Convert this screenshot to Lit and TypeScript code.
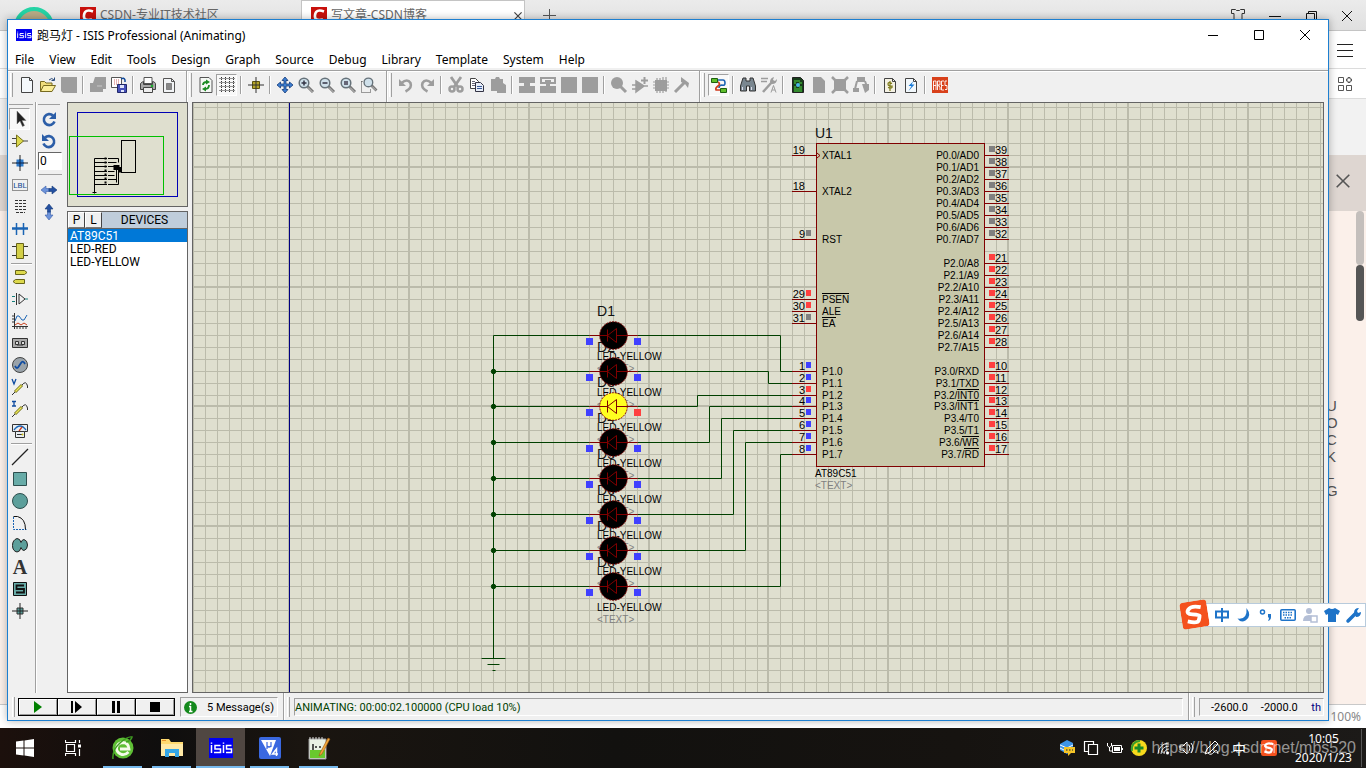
import { LitElement, html, svg, css } from "lit";
import { customElement, state } from "lit/decorators.js";
import { classMap } from "lit/directives/class-map.js";

const G = "#9d9d9d";

const lens = (inner: unknown) => svg`
  <path d="M9.500 9.500L15 15" stroke="#777" stroke-width="3"/>
  <path d="M10 10.500L14.500 15" stroke="#c9c9c9" stroke-width="1"/>
  <circle cx="6" cy="6" r="4.800" fill="#cfe0ea" stroke="#66727a" stroke-width="1.500"/>${inner}`;

const sheet = (fill: string, stroke: string) => svg`<path d="M2.500 1.500h8l3 3v11h-11z" fill="${fill}" stroke="${stroke}"/><path d="M10.500 1.500v3h3" fill="none" stroke="${stroke}"/>`;

const ICONS: Record<string, unknown> = {
  new: svg`<path d="M2.500 .5h8l3 3v12h-11z" fill="#f4f8fb" stroke="#444"/><path d="M10.500 .5v3h3" fill="none" stroke="#444"/>`,
  open: svg`<path d="M.5 14.500v-10h4l1.500 1.500h6v3" fill="#f0dd7c" stroke="#776a20"/><path d="M.5 14.500l3-6h12l-3.500 6z" fill="#fbee9a" stroke="#776a20"/><path d="M9 3q3-3 5 0m.5-2.500v3h-3" fill="none" stroke="#2a4a7a"/>`,
  save: svg`<path d="M0 0h16v16h-14l-2-2z" fill="${G}"/>`,
  importg: svg`<path d="M5 0h11v12h-3v3h-13v-9h3z" fill="${G}"/><path d="M7 9h5" stroke="#c8c8c8"/>`,
  exportb: svg`<path d="M.5 .5h10v10h-10z" fill="#fff" stroke="#555"/><path d="M3 3h5M3 5h5M3 7h5" stroke="#c66" stroke-dasharray="1 1"/><path d="M10 2q3-2 4 1v2" fill="none" stroke="#124a9a" stroke-width="1.500"/><path d="M6.500 7.500h9v8h-9z" fill="#4650b8" stroke="#20286a"/><path d="M9 8h4v3h-4zM10 13h3v2h-3z" fill="#dfe4fa"/>`,
  print: svg`<path d="M4 .5h8v6h-8z" fill="#fff" stroke="#555"/><path d="M.5 6.500q2-2 3-2v3h9v-3q2 0 3 2v6h-15z" fill="#a9a9a9" stroke="#444"/><path d="M3.500 10.500h9v5h-9z" fill="#eee" stroke="#444"/><circle cx="12" cy="9" r="1.300" fill="#1fae2e"/>`,
  docarea: svg`${sheet("#f2f4f6", "#555")}<path d="M5.500 6.500h5v6h-5z" fill="#888" stroke="#444" stroke-dasharray="1 1"/>`,
  refresh: svg`<path d="M2 .5h9l3 3v12h-12z" fill="#f5f8f5" stroke="#555"/><path d="M5 8q0-3 4-3M11 8q0 4-4 4" fill="none" stroke="#1d8b25" stroke-width="1.800"/><path d="M8 2.500l4 2.500-4 2.500zM8 9.500l-4 2.500 4 2.500z" fill="#1d8b25"/>`,
  grid: svg`<path d="M.5 1.500h15M.5 5.500h15M.5 9.500h15M.5 13.500h15M2.500 0v16M6.500 0v16M10.500 0v16M14.500 0v16" stroke="#333" stroke-dasharray="1 1" fill="none"/>`,
  origin: svg`<path d="M8 0v16M0 8h16" stroke="#333"/><path d="M4.500 4.500h7v7h-7z" fill="#b5a62a" stroke="#5c5410"/><path d="M8 4v8M4 8h8" stroke="#333"/>`,
  move: svg`<path d="M8 0l3 3.500h-2v3.500h3.500v-2L16 8l-3.500 3v-2H9v3.500h2L8 16l-3-3.500h2V9H3.500v2L0 8l3.500-3v2H7V3.500H5z" fill="#3d7ed0" stroke="#143a7a" stroke-width=".8"/>`,
  zin: lens(svg`<path d="M6 3.500v5M3.500 6h5" stroke="#334" stroke-width="1.500"/>`),
  zout: lens(svg`<path d="M3.500 6h5" stroke="#334" stroke-width="1.500"/>`),
  zall: lens(svg`<path d="M4 4h4v4h-4z" fill="#667"/>`),
  zarea: svg`<path d="M.5 4.500v11h9v-3M.5 4.500h2" fill="none" stroke="#444" stroke-dasharray="1 1"/><g transform="translate(2 0) scale(.9)">${lens("")}</g>`,
  undo: svg`<path d="M3.500 6q6-5 9 0q2 5-5 8.500" fill="none" stroke="${G}" stroke-width="2.600"/><path d="M1 2v7h7z" fill="${G}"/>`,
  redo: svg`<path d="M12.500 6q-6-5-9 0q-2 5 5 8.500" fill="none" stroke="${G}" stroke-width="2.600"/><path d="M15 2v7h-7z" fill="${G}"/>`,
  cut: svg`<path d="M3 0l7 10M13 0l-7 10" stroke="${G}" stroke-width="2.800"/><circle cx="4" cy="12" r="2.500" fill="none" stroke="${G}" stroke-width="2.500"/><circle cx="12" cy="12" r="2.500" fill="none" stroke="${G}" stroke-width="2.500"/>`,
  copy: svg`<path d="M1.500 1.500h5l3 3v7h-8z" fill="#fff" stroke="#444"/><path d="M3 4.500h3M3 6.500h4M3 8.500h4" stroke="#667"/><path d="M6.500 5.500h5l3 3v6h-8z" fill="#e8eef8" stroke="#334"/><path d="M8 9.500h5M8 11.500h5" stroke="#3a5a9a"/>`,
  paste: svg`<path d="M1 2h4l1-2h3l1 2h3v4l3 2v8h-9v-2h-6z" fill="${G}"/>`,
  blk1: svg`<path d="M0 0h16v6h-5v3h5v7h-16v-7h5v-3h-5z" fill="${G}"/>`,
  blk2: svg`<path d="M1 1h14v5h-14zM5 4h6" fill="none" stroke="${G}" stroke-width="2"/><path d="M6 6h4v3h6v7h-16v-7h6z" fill="${G}"/>`,
  blk: svg`<path d="M0 0h16v16h-16z" fill="${G}"/>`,
  pick: svg`<circle cx="6" cy="6" r="6" fill="${G}"/><path d="M9 9l6 6" stroke="${G}" stroke-width="3"/>`,
  make: svg`<path d="M4 4l8 5-8 6zM0 8h5M0 12h5M10 9h6" fill="${G}" stroke="${G}" stroke-width="1.500"/><path d="M12.500 0v7M9 3.500h7" stroke="${G}" stroke-width="2"/>`,
  chipg: svg`<path d="M2 3h12v11h-12z" fill="${G}"/><path d="M4 1v15M7 1v15M10 0v16M13 0v15M0 5h16M0 8h16M0 11h16" stroke="${G}" stroke-width="1.200"/>`,
  hammer: svg`<path d="M1 15L11 5" stroke="${G}" stroke-width="3"/><path d="M7 0l8 6-1 5-3-4-4-2z" fill="${G}"/>`,
  wire: svg`<path d="M5 3h7q2 0 2 3t-3 2q-3 0-3 3" fill="none" stroke="#1c64b4" stroke-width="1.600"/><path d="M7 5q3 2 0 4t-2 4h6" fill="none" stroke="#d03a1c" stroke-width="1.600"/><path d="M.5 1.500h6v4h-6zM9.500 11.500h6v4h-6z" fill="#5fbf2c" stroke="#1d5f10"/>`,
  find: svg`<path d="M3 1h3v3h4v-3h3l2.500 8v5h-6v-5h-3v5h-6v-5z" fill="#7a8790" stroke="#333"/><path d="M2.500 10v3M11.500 10v3" stroke="#dde"/>`,
  proptool: svg`<path d="M0 1.500h7M0 4.500h6" stroke="${G}" stroke-width="1.500"/><path d="M2 15L11 5" stroke="${G}" stroke-width="2.500"/><path d="M9 5q0-4 4-5l-1 3 2 1 2-2q0 5-5 5z" fill="${G}"/><path d="M10 15.500l2.500-7 2.500 7M11 13h3" stroke="${G}" fill="none"/>`,
  pcb: svg`<path d="M2.500 .5h8l3 3v12h-11z" fill="#173e1b" stroke="#222"/><path d="M4 4h6M4 6h2M9 6h3M4 10h2M9 10h3M4 12h8M4 14h8" stroke="#52d843"/><circle cx="8" cy="8" r="2" fill="#4bb9e8"/>`,
  docg: svg`<path d="M2 0h8l4 4v12h-12z" fill="${G}"/>`,
  boxx: svg`<path d="M2 2h12v12h-12z" fill="${G}"/><path d="M0 0l4 4M16 0l-4 4M0 16l4-4M16 16l-4-4" stroke="${G}" stroke-width="2.500"/>`,
  tree: svg`<path d="M4 0h8v5h-8z" fill="${G}"/><path d="M4 4l-2 8M12 4l2 6" stroke="${G}" stroke-width="2"/><path d="M0 11h6v4h-6zM9 7h7v6l-4 3z" fill="${G}"/>`,
  bom: svg`${sheet("#f5f2e4", "#444")}<path d="M10 6.500q-4-2-4 .5t4 2q1 3-4 1.500M8 4v10" stroke="#7d7a18" stroke-width="1.200" fill="none"/>`,
  erc: svg`${sheet("#f2f8fc", "#444")}<path d="M10.500 4l-5 5h3l-3 5 6-6.500h-3z" fill="#1478d8"/>`,
  ares: svg`<path d="M0 0h16v16h-16z" fill="#d8401a"/><path d="M1.500 13v-9h2.500v9M1.500 8.500h2.500M5.500 13v-9h2.500v4h-2.500l2.500 2v3M12 4h-2.500v9h2.500M9.500 8.500h2M15 4h-2v4.500h2v4h-2" fill="none" stroke="#fff" stroke-width=".9"/>`,

  arrow: svg`<path d="M5 0v13l3-3 2.500 5.500 2-1-2.500-5h4z" fill="#222" stroke="#777" stroke-width=".5"/>`,
  comp: svg`<path d="M0 5.500h5M0 10.500h5M11 8h5" stroke="#444"/><path d="M4.500 2v12l7-6z" fill="#dcd84c" stroke="#77731a"/>`,
  junction: svg`<path d="M8 0v16M0 8h16" stroke="#222"/><path d="M4.500 4.500h7v7h-7z" fill="#2d7acb"/><path d="M8 4v8M4 8h8" stroke="#124"/>`,
  lblbox: svg`<path d="M.5 2.500h15v11h-15z" fill="none" stroke="#333" stroke-dasharray="1 1"/><text x="8" y="11" text-anchor="middle" font-family="Roboto" font-size="8" fill="#124b94">LBL</text>`,
  script: svg`<path d="M3 1.500h11M3 4.500h11M3 7.500h11M3 10.500h11M4 13.500h9" stroke="#333" stroke-dasharray="3 1"/>`,
  bus: svg`<path d="M0 7.500h16" stroke="#1a64b4" stroke-width="2.500"/><path d="M4.500 2v12M11.500 2v12" stroke="#1a64b4" stroke-width="1.500"/>`,
  subckt: svg`<path d="M0 3.500h16M0 12.500h16" stroke="#333"/><path d="M4.500 .5h7v15h-7z" fill="#d3cf48" stroke="#66631a"/>`,
  term: svg`<path d="M3.500 1.500h9l2.500 2-2.500 2h-9zM12.500 10.500h-9l-2.500 2 2.500 2h9z" fill="#dcd84c" stroke="#66631a"/>`,
  pin: svg`<path d="M0 5.500h3M0 10.500h3M13 8h3" stroke="#16807c" stroke-width="1.200"/><path d="M4.500 2v12M7 3v10l6-5z" fill="none" stroke="#333"/>`,
  graph: svg`<path d="M2.500 0v16M0 13.500h16M5 13v3M8 13v3M11 13v3M14 13v3M0 3h3M0 6h3M0 9h3" stroke="#333" fill="none"/><path d="M3 8l2-5h2l3 4h2l3-5" stroke="#1a64b4" fill="none"/><path d="M3 12l3-2 3 2 3-2 3 2" stroke="#c8401c" fill="none"/>`,
  tape: svg`<path d="M.5 3.500h15v9h-15z" fill="#aaa" stroke="#333"/><path d="M3.500 9.500v-3h3v3zM9.500 9.500v-3h3v3zM5 10h6" fill="#ddd" stroke="#333"/>`,
  gen: svg`<circle cx="8" cy="8" r="7.500" fill="#9aa3aa" stroke="#444"/><path d="M3 9q2 4 4 0l2-3q2-3 4 1" fill="none" stroke="#0f4ba0" stroke-width="1.800"/>`,
  vprobe: svg`<path d="M0 0l2 5 2-5" fill="none" stroke="#0f4ba0" stroke-width="1.300"/><path d="M0 16l3-3" stroke="#333"/><path d="M3 13l7-7" stroke="#77731a" stroke-width="3"/><path d="M3.500 12.500l6-6" stroke="#ebe75a" stroke-width="1.500"/><path d="M10 6q4-5 5.500 1v2" fill="none" stroke="#333"/>`,
  iprobe: svg`<path d="M0 .5h4M2 0v5M0 5h4" fill="none" stroke="#0f4ba0" stroke-width="1.300"/><path d="M0 16l3-3" stroke="#333"/><path d="M3 13l7-7" stroke="#77731a" stroke-width="3"/><path d="M3.500 12.500l6-6" stroke="#ebe75a" stroke-width="1.500"/><path d="M10 6q4-5 5.500 1v2" fill="none" stroke="#333"/>`,
  meter: svg`<path d="M.5 1.500h15v7h-3v6h-9v-6h-3z" fill="#e9eef2" stroke="#333"/><path d="M2 7q6-8 12 0" fill="none" stroke="#1a64b4" stroke-width="1.300"/><path d="M7 8l3-4" stroke="#d03a1c" stroke-width="1.300"/><path d="M3.500 8.500h9M5 11.500h5" stroke="#333"/><circle cx="10.500" cy="11.500" r="1" fill="#d5c516"/>`,
  line: svg`<path d="M0 16L16 0" stroke="#222" stroke-width="1.200"/>`,
  box: svg`<path d="M1.500 1.500h13v13h-13z" fill="#68aca8" stroke="#2d4f4e"/>`,
  circle: svg`<circle cx="8" cy="8" r="7.500" fill="#5c9f9b" stroke="#2d4f4e"/>`,
  arc: svg`<path d="M1.500 2v12.500h13" fill="none" stroke="#1a64b4" stroke-dasharray="2 1"/><path d="M1.500 1.500h4q8 2 8 13" fill="none" stroke="#111"/>`,
  path2d: svg`<path d="M5 1.500q3 0 4 4 1-3 3-3 3.500 1 3.500 5.500t-3.500 5.500q-2 0-3-3-1 4.500-4 4.500-4.500-1-4.500-6.500t4.500-7z" fill="#5c9f9b" stroke="#222"/>`,
  texta: svg`<text x="8" y="15" text-anchor="middle" font-family="Liberation Serif" font-weight="bold" font-size="20" fill="#333">A</text>`,
  symbol: svg`<path d="M1.500 1.500h13v13h-13z" fill="#68aca8" stroke="#111"/><path d="M12 4.500h-7.500v3.500h7.500v3.500h-8" fill="none" stroke="#111" stroke-width="1.800"/>`,
  marker: svg`<path d="M8 0v16M0 8h16" stroke="#222"/><path d="M5 5h6v6h-6z" fill="#579b97" stroke="#333"/><path d="M8 5v6M5 8h6" stroke="#222"/>`,
  cw: svg`<path d="M12 4.500a5.500 5.500 0 1 0 1.500 6" fill="none" stroke="#2c5ea8" stroke-width="2.600"/><path d="M15 1v7h-7z" fill="#2c5ea8"/>`,
  ccw: svg`<path d="M4 4.500a5.500 5.500 0 1 1-1.500 6" fill="none" stroke="#2c5ea8" stroke-width="2.600"/><path d="M1 1v7h7z" fill="#2c5ea8"/>`,
  hflip: svg`<path d="M0 8l5-4v2.500h3v3h-3v2.500z" fill="#6d93da" stroke="#3a5ea8" stroke-width=".6"/><path d="M16 8l-5-4v2.500h-3v3h3v2.500z" fill="#2450a0" stroke="#143a7a" stroke-width=".6"/>`,
  vflip: svg`<path d="M8 16l-4-5h2.500v-3h3v3h2.500z" fill="#6d93da" stroke="#3a5ea8" stroke-width=".6"/><path d="M8 0l-4 5h2.500v3h3v-3h2.500z" fill="#2450a0" stroke="#143a7a" stroke-width=".6"/>`,
};

const icon = (name: string) => html`<svg class="ic" viewBox="0 0 16 16" aria-hidden="true">${ICONS[name]}</svg>`;

const TOOLBARS: string[][] = [
  ["new", "open", "save", "|", "importg", "exportb", "|", "print", "docarea"],
  ["refresh", "*grid", "|", "origin", "|", "move", "zin", "zout", "zall", "zarea"],
  ["undo", "redo", "|", "cut", "copy", "paste", "|", "blk1", "blk2", "blk", "blk", "|", "pick", "make", "chipg", "hammer"],
  ["*wire", "|", "find", "proptool", "|", "pcb", "docg", "boxx", "tree", "|", "bom", "erc", "|", "ares"],
];

const MODES = ["*arrow", "comp", "junction", "lblbox", "script", "bus", "subckt", "|", "term", "pin", "graph", "tape", "gen",
  "vprobe", "iprobe", "meter", "|", "line", "box", "circle", "arc", "path2d", "texta", "symbol", "marker"];

const tool = (n: string) => {
  if (n === "|") return html`<span class="sep"></span>`;
  const on = n.startsWith("*");
  const id = on ? n.slice(1) : n;
  return html`<button class=${classMap({ tb: true, on })} aria-label=${id}>${icon(id)}</button>`;
};

const MENUS = ["File", "View", "Edit", "Tools", "Design", "Graph", "Source", "Debug", "Library", "Template", "System", "Help"];

/* ---------- schematic ---------- */

const gx = (k: number) => 289 + 12 * k - (k >= 40 ? 1 : 0);
const gy = (k: number) => 107 + 12 * k - (k >= 25 ? 1 : 0);
const RED = "#ff4040", BLUE = "#4040ff", GREY = "#808080";
const P1Y = [371, 383, 395, 406, 418, 430, 442, 454];
const LEDY = [335, 371, 406, 442, 478, 514, 550, 586];
const TURNX = [780, 768, 697, 709, 721, 733, 745, 780];

type Pin = { y: number; n: string; label: string; c?: string; over?: number };
const LEFT: Pin[] = [
  { y: 155, n: "19", label: "XTAL1" }, { y: 191, n: "18", label: "XTAL2" }, { y: 239, n: "9", label: "RST", c: GREY },
  { y: 299, n: "29", label: "PSEN", c: RED, over: 27 }, { y: 311, n: "30", label: "ALE", c: RED },
  { y: 323, n: "31", label: "EA", c: GREY, over: 14 },
  ...P1Y.map((y, i) => ({ y, n: `${i + 1}`, label: `P1.${i}`, c: i === 2 ? RED : BLUE })),
];
const P3 = ["RXD", "TXD", "INT0", "INT1", "T0", "T1", "WR", "RD"];
const P3OVER: Record<string, number> = { INT0: 22, INT1: 22, WR: 17, RD: 15 };
const RIGHT: Pin[] = [
  ...[0, 1, 2, 3, 4, 5, 6, 7].map((i) => ({ y: 155 + 12 * i, n: `${39 - i}`, label: `P0.${i}/AD${i}`, c: GREY })),
  ...[0, 1, 2, 3, 4, 5, 6, 7].map((i) => ({ y: 263 + 12 * i, n: `${21 + i}`, label: `P2.${i}/A${8 + i}`, c: RED })),
  ...P3.map((s, i) => ({ y: P1Y[i], n: `${10 + i}`, label: `P3.${i}/${s}`, c: RED, over: P3OVER[s] })),
];

const gridLines = () => {
  const out: unknown[] = [];
  for (let k = -8; k < 200; k++) {
    const x = gx(k), major = k % 10 === 0;
    out.push(svg`<rect x=${major ? x - 1 : x} y="0" width=${major ? 2 : 1} height="2000"/>`);
  }
  for (let k = 0; k < 140; k++) {
    const y = gy(k), major = k % 10 === 5;
    out.push(svg`<rect x="0" y=${major ? y - 1 : y} width="3000" height=${major ? 2 : 1}/>`);
  }
  return out;
};

const schematic = () => svg`
  <g transform="translate(-193 -103)" font-family="Liberation Sans, Arial, sans-serif" font-size="10">
    <g fill="#bbbbab">${gridLines()}</g>
    <rect x="289" y="0" width="1" height="2000" fill="#000080"/>
    <g transform="translate(.5 .5)" fill="none" stroke="#004000">
      <path d="M493 335V658M481 658h24M487 664h12M492 670h3"/>
      ${LEDY.map((y, i) => svg`<path d="M493 ${y}H589M637 ${y}H${TURNX[i]}V${P1Y[i]}H792"/>`)}
      ${LEDY.slice(1).map((y) => svg`<circle cx="493" cy=${y} r="2.200" fill="#004000"/>`)}
    </g>
    ${LEDY.map((y, i) => svg`
      <text x="597" y=${y - 19} font-size="14" fill="#111">D${i + 1}</text>
      <text x="597" y=${y + 25}>LED-YELLOW</text>
      <text x="597" y=${y + 37} fill="#808080">&lt;TEXT&gt;</text>`)}
    ${LEDY.map((y, i) => svg`
      <g fill="none" stroke="#800000" transform="translate(.5 .5)">
        <path d="M589 ${y}h48"/>
        <circle cx="613" cy=${y} r="13.800" fill=${i === 2 ? "#ffff20" : "#000"} stroke-dasharray="2 1"/>
        <path d="M589 ${y}h18M616 ${y}h21M607 ${y - 6}v12M616 ${y - 7}v14l-9-7z"/>
      </g>
      <rect x="586" y=${y + 3} width="7" height="7" fill=${BLUE}/>
      <rect x="634" y=${y + 3} width="7" height="7" fill=${i === 2 ? RED : BLUE}/>`)}
    <rect x="816.500" y="143.500" width="168" height="323" fill="#c8c8aa" stroke="#800000"/>
    <path d="M817 153l3 2.500-3 2.500" fill="none" stroke="#800000"/>
    <text x="815" y="138" font-size="14" fill="#111">U1</text>
    <text x="815" y="477">AT89C51</text>
    <text x="815" y="489" fill="#808080">&lt;TEXT&gt;</text>
    ${LEFT.map((p) => svg`
      <rect x="792" y=${p.y} width="24" height="1" fill="#800000"/>
      <text x="805" y=${p.y - 1} font-size="11" text-anchor="end">${p.n}</text>
      ${p.c ? svg`<rect x="806" y=${p.y - 9} width="5" height="6" fill=${p.c}/>` : ""}
      <text x="822" y=${p.y + 4}>${p.label}</text>
      ${p.over ? svg`<rect x="822" y=${p.y - 6} width=${p.over} height="1"/>` : ""}`)}
    ${RIGHT.map((p) => svg`
      <rect x="985" y=${p.y} width="24" height="1" fill="#800000"/>
      <text x="995" y=${p.y - 1} font-size="11">${p.n}</text>
      <rect x="989" y=${p.y - 9} width="6" height="6" fill=${p.c}/>
      <text x="979" y=${p.y + 4} text-anchor="end">${p.label}</text>
      ${p.over ? svg`<rect x=${979 - p.over} y=${p.y - 6} width=${p.over} height="1"/>` : ""}`)}
  </g>`;

const overview = svg`
  <g transform="translate(-67.500 -102.500)" fill="none" stroke="#000">
    <rect x="77" y="112" width="100" height="84" stroke="#0000b4"/>
    <rect x="121" y="140" width="14" height="32"/>
    <path d="M94 158V193M94 158h24v4M94 162h22M94 166h23M94 171h20M94 175h20M94 179h22M94 184h24V168M116 182V168M92 192h4"/>
    <path d="M105 157v28" stroke-width="2" stroke-dasharray="2 2"/>
    <path d="M113 168h6v4M113 166h6" stroke-width="3"/>
    <path d="M107 157v28" stroke="#dfdfcf"/>
    <rect x="69" y="136" width="94" height="58" stroke="#00c000"/>
  </g>`;

const isisLogo = html`<svg class="fill" viewBox="0 0 24 20" preserveAspectRatio="none" aria-label="ISIS"><rect width="24" height="20" fill="#0000f0"/>
  <path d="M2.500 7v8M2.500 4.500v1.300M11.500 7.500H6v3.500h5.500v3.500H5M14.500 7v8M14.500 4.500v1.300M22.500 7.500H17.500v3.500h5v3.500H17" fill="none" stroke="#fff" stroke-width="1.500"/></svg>`;

const winLogo = html`<svg width="18" height="18" viewBox="0 0 18 18"><path d="M0 2.500l7.500-1v7H0zM8.500 1.400L18 0v8.500H8.500zM0 9.500h7.500v7L0 15.500zM8.500 9.500H18V18l-9.500-1.400z" fill="#fff"/></svg>`;
const taskView = html`<svg width="17" height="18" viewBox="0 0 17 18"><path d="M.5 1v2.500h10V1M.5 17v-2.500h10V17M1.500 5.500h8v7h-8zM14.500 1v3M14.500 10v7" fill="none" stroke="#fff" stroke-width="1.200"/><rect x="13" y="5.500" width="3" height="3" fill="#fff"/></svg>`;
const eLogo = html`<svg width="24" height="24" viewBox="0 0 24 24"><circle cx="12" cy="12" r="10.500" fill="#5fbf35"/><path d="M17.500 16q-4 4-8 2t-4-6q1-5 6-5.500 6 0 6.500 6.500H9" fill="none" stroke="#f4fbe9" stroke-width="2.800"/><path d="M2 23Q1 14 9 7T21 1q-1 4-6 5" fill="none" stroke="#3f9d22" stroke-width="1.500"/></svg>`;
const folder = html`<svg width="22" height="20" viewBox="0 0 22 20"><path d="M0 1h8l2 3h12v14H0z" fill="#ffd96f"/><path d="M0 6h22v12H0z" fill="#ffe9a6"/><path d="M4 19v-8h14v8h-4v-4H8v4z" fill="#35a7e8"/><path d="M1 2h4v1H1z" fill="#e8912c"/></svg>`;
const mu = html`<svg width="22" height="22" viewBox="0 0 22 22"><rect width="22" height="22" rx="2" fill="#3a68e0"/><path d="M2 3h15l-6 16z" fill="#fff"/><path d="M8 12V5v4q2 2 4 0V5v5" fill="none" stroke="#3a68e0" stroke-width="1.200"/><path d="M17.500 19v-7l-4 5h5.500" fill="none" stroke="#fff" stroke-width="1.500"/></svg>`;
const npp = html`<svg width="24" height="24" viewBox="0 0 24 24"><path d="M2 3h17v20H2z" fill="#e9f2e4" stroke="#9a9a9a"/><path d="M3 14h15v8H3z" fill="#69c92d"/><path d="M3 1v3M6 1v3M9 1v3M12 1v3M15 1v3" stroke="#ddd"/><path d="M6 8v6M8 11h2M12 11h2" stroke="#222" stroke-width="1.500"/><path d="M21 2l-8 15-1 3 3-2 8-15z" fill="#f2a73c" stroke="#9a5a12" stroke-width=".6"/></svg>`;

const TASKS = [
  { id: "browser", i: eLogo, c: "run" }, { id: "explorer", i: folder, c: "run" },
  { id: "isis", i: html`<span class="tlogo">${isisLogo}</span>`, c: "run act" },
  { id: "keil", i: mu, c: "run" }, { id: "notepad", i: npp, c: "run" },
];

const TRAY = [
  svg`<path d="M1 4l7-4 6 3v6l-6 5-7-4z" fill="#3f95e8"/><path d="M1 5l7 3 6-3M1 8l6 3" stroke="#fff" fill="none"/><rect x="5" y="7" width="11" height="6" fill="#f5c428"/><path d="M7 10h7" stroke="#553" stroke-width="1.500" stroke-dasharray="1.500 1.500"/><path d="M9 13v3l3-3z" fill="#f5c428"/>`,
  svg`<path d="M5.500 4.500h9v10h-9zM5 11.500h-3.500v-10h9V4" fill="none" stroke="#fff" stroke-width="1.200"/>`,
  svg`<path d="M5.500 5.500h9v7h-9zM15.500 8v2" fill="none" stroke="#fff"/><path d="M7 7h6v4H7z" fill="#fff"/><path d="M.5 3v3q2 3 4 0V3M2.500 7v4h3" fill="none" stroke="#fff"/>`,
  svg`<circle cx="8" cy="8" r="8" fill="#f6d91c"/><path d="M1 11a8 8 0 0 1 8-10" stroke="#3a9d2c" stroke-width="2" fill="none"/><path d="M8 3.500v9M3.500 8h9" stroke="#188a28" stroke-width="3"/>`,
  svg`<path d="M3 14a11 11 0 0 1 11-11M6 14a8 8 0 0 1 8-8M9 14a5 5 0 0 1 5-5" stroke="#ddd" fill="none"/><circle cx="12.500" cy="13" r="1.500" fill="#fff"/>`,
  svg`<path d="M1 6h3l4-4v12l-4-4H1z" fill="none" stroke="#fff"/><path d="M10 5q2 3 0 6M12 3q4 5 0 10" fill="none" stroke="#fff"/>`,
  svg`<path d="M2 14l2-5 8-8 3 3-8 8zM5 13q3 3 6-1t4 2" fill="none" stroke="#fff"/>`,
];

const sogouS = svg`<rect width="28" height="28" rx="4" fill="#f4511e"/><path d="M21.500 7.500Q12 4 8.500 8t3.500 5.500 7 2.500-1.500 4.500T6 20" fill="none" stroke="#fff" stroke-width="4"/>`;

const IME = [
  svg`<path d="M2 4.500h12v6H2zM8 1v14" fill="none" stroke="#1e73c8" stroke-width="2"/>`,
  svg`<path d="M10.500 1q6 8-1 12.500-5 2.500-8-2 10 1.500 9-10.500z" fill="#1e73c8"/>`,
  svg`<circle cx="4.500" cy="5" r="2" fill="none" stroke="#1e73c8" stroke-width="1.500"/><path d="M10 7h3v3q0 3-3 4 1-2 1-3.500h-1z" fill="#1e73c8"/>`,
  svg`<rect x=".8" y="2.800" width="14.400" height="10.400" rx="1" fill="#fff" stroke="#1e73c8" stroke-width="1.600"/><path d="M3 5.500h10M3 8h10M4.500 10.800h7" stroke="#1e73c8" stroke-width="1.500" stroke-dasharray="1.500 1"/>`,
  svg`<circle cx="7" cy="4" r="3" fill="#b4bfd6"/><path d="M1 14q0-6 6-6t6 6z" fill="#b4bfd6"/><rect x="9" y="9" width="6" height="6" fill="#fff" stroke="#b4bfd6" stroke-width="1.500"/>`,
  svg`<path d="M5 1q3 2 6 0l5 3-2 4-2-1v8H4V7L2 8 0 4z" fill="#1e73c8"/>`,
  svg`<path d="M2 14l7-7" stroke="#1e73c8" stroke-width="3.500" stroke-linecap="round"/><path d="M8 6q0-5 5-5l-2 3 1 2 3-1q0 5-5 5z" fill="#1e73c8"/>`,
];

const small = (content: unknown) => html`<svg class="ic" viewBox="0 0 16 16" aria-hidden="true">${content}</svg>`;

@customElement("app-root")
export class AppRoot extends LitElement {
  @state() private device = 0;

  static styles = css`
    :host { display: block; }
    * { box-sizing: border-box; }
    button { font: inherit; color: inherit; border: 0; background: none; padding: 0; margin: 0; }
    svg { display: block; flex: none; }
    .ic { width: 16px; height: 16px; overflow: visible; }
    .fill { width: 100%; height: 100%; }
    .desktop { position: relative; display: flex; flex-direction: column; height: 100vh; min-height: 600px; overflow: hidden;
      font-family: "Noto Sans", "Noto Sans CJK SC", sans-serif; font-size: 12px; color: #000; }

    .browser { flex: 1; min-height: 0; display: flex; flex-direction: column; background: #fbf0ea; overflow: hidden; }
    .tabs { height: 31px; flex: none; display: flex; background: linear-gradient(#ebebeb, #e0e0e0); border-bottom: 1px solid #c4c4c4; }
    .avatar { width: 40px; height: 40px; margin: 7px 25px 0 14px; border-radius: 50%; border: 4px solid #25d3a5; background: #b8ab86; flex: none; }
    .tab { display: flex; gap: 4px; width: 222px; padding: 7px 0 0 1px; align-items: flex-start; color: #666; line-height: 16px; white-space: nowrap; }
    .tab.cur { width: 224px; background: #fff; border: solid #c4c4c4; border-width: 1px 1px 0; padding: 6px 2px 0 9px; }
    .fav { width: 16px; height: 16px; flex: none; }
    .tab .x { margin: 5px 0 0 auto; }
    .plus { margin: 9px 0 0 18px; }
    .wctl { margin-left: auto; display: flex; gap: 22px; padding: 8px 12px 0 0; }
    .bar { background: #fff; border-bottom: 1px solid #dcdcdc; flex: none; display: flex; justify-content: flex-end; align-items: center; padding-right: 13px; }
    .bar.b1 { height: 38px; }
    .bar.b2 { height: 30px; }
    .blank { height: 56px; background: #f2f2f2; flex: none; }
    .notice { height: 56px; background: #ded6d1; flex: none; display: flex; justify-content: flex-end; align-items: center; padding: 0 16px 4px 0; }
    .article { flex: 1; display: flex; justify-content: flex-end; min-height: 0; }
    .letters { margin: 186px 16px 0 0; width: 12px; font: 15px/17px "Liberation Sans", sans-serif; color: #555; }
    .letters span { display: block; }
    .rail { width: 12px; display: flex; flex-direction: column; align-items: center; }
    .thumb1 { width: 8px; height: 54px; border-radius: 4px; background: #c4bfbc; }
    .thumb2 { width: 8px; height: 56px; border-radius: 4px; background: #555; }
    .foot { height: 24px; flex: none; background: #fff; border-top: 1px solid #c9c9c9; display: flex; justify-content: flex-end; align-items: center; color: #888; padding-right: 5px; }

    .window { position: absolute; left: 7px; top: 19px; right: 37px; bottom: 47px; background: #f0f0f0; border: 1px solid #1d7fd0;
      box-shadow: 0 0 8px rgba(0,0,0,.3); display: flex; flex-direction: column; }
    .title { height: 29px; background: #fff; display: flex; align-items: center; padding-left: 8px; gap: 5px; flex: none; }
    .title .logo { width: 16px; height: 12px; }
    .ctl { margin-left: auto; display: flex; gap: 34px; padding-right: 17px; }
    .menu { height: 21px; background: #fff; display: flex; gap: 15px; padding: 1px 7px 0; align-items: center; flex: none; border-bottom: 2px solid #f0f0f0; }
    .tools { height: 32px; flex: none; display: flex; border-top: 1px solid #a0a0a0; box-shadow: inset 0 1px #fff; }
    .tg { display: flex; align-items: center; padding: 0 7px 4px 2px; border-right: 1px solid #a0a0a0; box-shadow: 1px 0 #fff; }
    .tg:last-child { border: 0; box-shadow: none; }
    .tg::before { content: ""; width: 1px; height: 24px; border-left: 1px solid #fff; border-right: 1px solid #a0a0a0; margin-right: 3px; }
    .tb { width: 21px; height: 22px; display: grid; place-items: center; flex: none; }
    .on { background: #f8f8f8; border: 1px solid; border-color: #a0a0a0 #fff #fff #a0a0a0; }
    .tg .sep { width: 2px; height: 18px; margin: 0 3px; border-left: 1px solid #a0a0a0; border-right: 1px solid #fff; }

    .work { flex: 1; min-height: 0; display: flex; }
    .modes { width: 28px; flex: none; display: flex; flex-direction: column; padding: 1px 0 0 1px; border-right: 1px solid #a0a0a0; box-shadow: 1px 0 #fff; }
    .grip { height: 2px; border-bottom: 1px solid #a0a0a0; margin: 0 2px 3px 0; flex: none; }
    .modes .sep { height: 2px; margin: 1px 3px 1px 2px; border-top: 1px solid #a0a0a0; background: #fff; flex: none; }
    .orient { width: 31px; flex: none; padding: 1px 5px 0 2px; display: flex; flex-direction: column; align-items: stretch; }
    .angle { width: 24px; height: 18px; border: 1px solid; border-color: #666 #fff #fff #666; padding: 0 1px; font: 12px Roboto, sans-serif; background: #fff; }
    .orient .sep { height: 1px; background: #a0a0a0; margin: 4px 0; }
    .side { width: 121px; flex: none; display: flex; flex-direction: column; gap: 4px; }
    .over { height: 105px; flex: none; border: 1px solid #646464; background: #dfdfcf; overflow: hidden; }
    .devs { flex: 1; min-height: 0; border: 1px solid #646464; background: #fff; font-family: Roboto, sans-serif; }
    .dh { height: 17px; display: flex; background: #bfcddb; border-bottom: 1px solid #646464; }
    .dh button { width: 17px; background: #f0f0f0; border: 1px solid; border-color: #fff #444 #777 #fff; line-height: 13px; }
    .dh span { flex: 1; text-align: center; line-height: 16px; }
    .devs ul { list-style: none; margin: 0; padding: 0; }
    .devs li button { display: block; width: 100%; text-align: left; height: 13px; line-height: 14px; padding-left: 2px; }
    .devs li .sel { background: #0078d7; color: #fff; }
    .canvas { flex: 1; min-width: 0; margin: 0 4px; border: 1px solid #646464; background: #dfdfcf; overflow: hidden; }

    .status { height: 27px; flex: none; display: flex; align-items: center; font-family: Roboto, sans-serif; font-size: 11px; padding: 0 4px; }
    .sg { width: 3px; height: 20px; border: solid #a0a0a0; border-width: 0 1px 0 0; border-left: 1px solid #fff; flex: none; }
    .play { display: flex; background: #000; padding: 1px; margin-left: 3px; gap: 1px; }
    .play button { width: 38px; height: 16px; background: #f0f0f0; border: 1px solid; border-color: #fff #999 #999 #fff; display: grid; place-items: center; }
    .panel { border: 1px solid; border-color: #a0a0a0 #fff #fff #a0a0a0; display: flex; align-items: center; height: 18px; padding-top: 2px; white-space: nowrap; }
    .msg { width: 98px; margin-left: 5px; padding-left: 3px; gap: 10px; height: 20px; }
    .vr { width: 2px; height: 27px; border-left: 1px solid #a0a0a0; background: #fff; flex: none; margin: 0 2px 0 5px; }
    .vr + .sg { margin-right: 4px; }
    .sim { flex: 1; color: #004000; }
    .pos { width: 125px; gap: 13px; padding-left: 11px; }
    .pos span:last-child { margin-left: auto; color: #000080; padding-right: 2px; }

    .taskbar { position: relative; height: 40px; flex: none; display: flex; background: linear-gradient(90deg, #1c100c, #0f0e0e 12%, #1a1510 22%, #12110f 45%, #161310 70%, #1c1a18); color: #fff; }
    .task { width: 49px; display: grid; place-items: center; flex: none; border: solid transparent; border-width: 0 5px; }
    .task.run { box-shadow: inset 0 -2px #76b9ed; }
    .task.act { background: #504742; border: 0; }
    .tlogo { width: 24px; height: 20px; }
    .tray { margin-left: auto; display: flex; align-items: center; gap: 8px; }
    .zh { font: 14px "Noto Sans CJK SC", sans-serif; width: 16px; margin: 0 5px; }
    .clock { width: 80px; text-align: center; line-height: 19px; border-right: 1px solid #555; margin: 0 4px 0 -3px; padding-left: 4px; }
    .mark { position: absolute; right: 10px; top: 11px; font: 16px/18px "Liberation Sans", sans-serif; color: rgba(255,255,255,.55); }

    .ime { position: absolute; right: 0; bottom: 141px; height: 24px; padding: 0 3px 0 8px; display: flex; align-items: center; gap: 6px; background: #fff; border: 1px solid #b8cbdc; }
    .sg-logo { position: absolute; left: -25px; top: -3px; width: 27px; height: 27px; transform: rotate(-9deg); }
  `;

  private fav() {
    return html`<svg class="fav" viewBox="0 0 16 16"><rect width="16" height="16" fill="#c8100c"/><path d="M13 4.500Q5 1.500 4 8t8 4.500" fill="none" stroke="#fff" stroke-width="2.600"/></svg>`;
  }

  private cross(size: number, color: string, w = 1.2) {
    return html`<svg width=${size} height=${size} viewBox="0 0 10 10"><path d="M.5 .5l9 9M9.500 .5l-9 9" stroke=${color} stroke-width=${(w * 10) / size} fill="none"/></svg>`;
  }

  private renderBrowser() {
    return html`<div class="browser">
      <div class="tabs">
        <div class="avatar"></div>
        <div class="tab">${this.fav()}<span>CSDN-专业IT技术社区</span></div>
        <div class="tab cur">${this.fav()}<span>写文章-CSDN博客</span><span class="x">${this.cross(8, "#444")}</span></div>
        <svg class="plus" width="13" height="13" viewBox="0 0 13 13"><path d="M6.500 0v13M0 6.500h13" stroke="#555"/></svg>
        <div class="wctl">
          <svg width="16" height="15" viewBox="0 0 16 15"><path d="M1.500 1.500h4l1 1h3l1-1h4v4h-2.500v9M1.500 1.500v4h2.500v9" fill="none" stroke="#333"/></svg>
          <svg width="14" height="15" viewBox="0 0 14 15"><path d="M1 8.500h12" stroke="#111"/></svg>
          <svg width="14" height="15" viewBox="0 0 14 15"><path d="M2.500 5.500h8v8h-8zM4.500 5V3.500h8v8H11" fill="none" stroke="#111"/></svg>
          <svg width="14" height="15" viewBox="0 0 14 15"><path d="M2 3l10 10M12 3L2 13" stroke="#111"/></svg>
        </div>
      </div>
      <div class="bar b1"><svg width="16" height="14" viewBox="0 0 16 14"><path d="M0 1.500h16M0 7.500h16M0 13.500h16" stroke="#222"/></svg></div>
      <div class="bar b2"><svg width="16" height="16" viewBox="0 0 16 16"><path d="M1.500 1.500h5v5h-5zM1.500 9.500h5v5h-5zM9.500 9.500h5v5h-5zM11 1.500h2v1.500h1.500v2h-1.500v1.500h-2v-1.500h-1.500v-2h1.500z" fill="none" stroke="#555"/></svg></div>
      <div class="blank"></div>
      <div class="notice">${this.cross(14, "#555", 1.6)}</div>
      <div class="article">
        <div class="letters">${["U", "O", "C", "K", "L", "G"].map((c) => html`<span>${c}</span>`)}</div>
        <div class="rail"><div class="thumb1"></div><div class="thumb2"></div></div>
      </div>
      <div class="foot">100%</div>
    </div>`;
  }

  private renderWindow() {
    return html`<section class="window">
      <div class="title">
        <span class="logo">${isisLogo}</span><span>跑马灯 - ISIS Professional (Animating)</span>
        <div class="ctl">
          <button aria-label="Minimize"><svg width="12" height="12" viewBox="0 0 12 12"><path d="M1 6.500h10" stroke="#000"/></svg></button>
          <button aria-label="Maximize"><svg width="12" height="12" viewBox="0 0 12 12"><path d="M1.500 1.500h9v9h-9z" fill="none" stroke="#000"/></svg></button>
          <button aria-label="Close"><svg width="12" height="12" viewBox="0 0 12 12"><path d="M1 1l10 10M11 1L1 11" stroke="#000"/></svg></button>
        </div>
      </div>
      <nav class="menu">${MENUS.map((m) => html`<button>${m}</button>`)}</nav>
      <div class="tools">${TOOLBARS.map((g) => html`<div class="tg">${g.map(tool)}</div>`)}</div>
      <div class="work">
        <div class="modes"><div class="grip"></div>${MODES.map(tool)}</div>
        <div class="orient">
          <div class="grip"></div>
          ${tool("cw")}${tool("ccw")}
          <input class="angle" aria-label="Rotation angle" value="0" />
          <span class="sep"></span>
          ${tool("hflip")}${tool("vflip")}
        </div>
        <div class="side">
          <div class="over"><svg class="fill">${overview}</svg></div>
          <div class="devs">
            <div class="dh"><button>P</button><button>L</button><span>DEVICES</span></div>
            <ul>${["AT89C51", "LED-RED", "LED-YELLOW"].map((d, i) => html`<li>
              <button class=${classMap({ sel: i === this.device })} @click=${() => (this.device = i)}>${d}</button></li>`)}</ul>
          </div>
        </div>
        <div class="canvas"><svg class="fill">${schematic()}</svg></div>
      </div>
      <div class="status">
        <span class="sg"></span>
        <div class="play">
          <button aria-label="Play"><svg width="10" height="12" viewBox="0 0 10 12"><path d="M1 0l8 6-8 6z" fill="#008000"/></svg></button>
          <button aria-label="Step"><svg width="12" height="12" viewBox="0 0 12 12"><path d="M0 0h2v12H0zM4 0l7 6-7 6z"/></svg></button>
          <button aria-label="Pause"><svg width="8" height="12" viewBox="0 0 8 12"><path d="M0 0h3v12H0zM5 0h3v12H5z"/></svg></button>
          <button aria-label="Stop"><svg width="10" height="10" viewBox="0 0 10 10"><path d="M0 0h10v10H0z"/></svg></button>
        </div>
        <div class="panel msg"><svg width="13" height="13" viewBox="0 0 13 13"><circle cx="6.500" cy="6.500" r="6.500" fill="#14891c"/><path d="M6.500 5v5.500M5 5.500h2M5 10.500h3.500M6.500 2v2" stroke="#fff" stroke-width="1.500"/></svg><span>5 Message(s)</span></div>
        <span class="vr"></span><span class="sg"></span>
        <div class="panel sim">ANIMATING: 00:00:02.100000 (CPU load 10%)</div>
        <span class="vr"></span><span class="sg"></span>
        <div class="panel pos"><span>-2600.0</span><span>-2000.0</span><span>th</span></div>
      </div>
    </section>`;
  }

  private renderTaskbar() {
    return html`<footer class="taskbar">
      <button class="task" aria-label="Start">${winLogo}</button>
      <button class="task" aria-label="Task view">${taskView}</button>
      ${TASKS.map((t) => html`<button class="task ${t.c}" aria-label=${t.id}>${t.i}</button>`)}
      <div class="tray">
        ${TRAY.map((t) => small(t))}
        <span class="zh">中</span>
        <svg class="ic" viewBox="0 0 28 28">${sogouS}</svg>
        <div class="clock"><div>10:05</div><div>2020/1/23</div></div>
      </div>
      <div class="mark">https://blog.csdn.net/mbs520</div>
    </footer>`;
  }

  render() {
    return html`<main class="desktop">
      ${this.renderBrowser()}
      ${this.renderTaskbar()}
      ${this.renderWindow()}
      <div class="ime"><svg class="sg-logo" viewBox="0 0 28 28">${sogouS}</svg>${IME.map((i) => small(i))}</div>
    </main>`;
  }
}
